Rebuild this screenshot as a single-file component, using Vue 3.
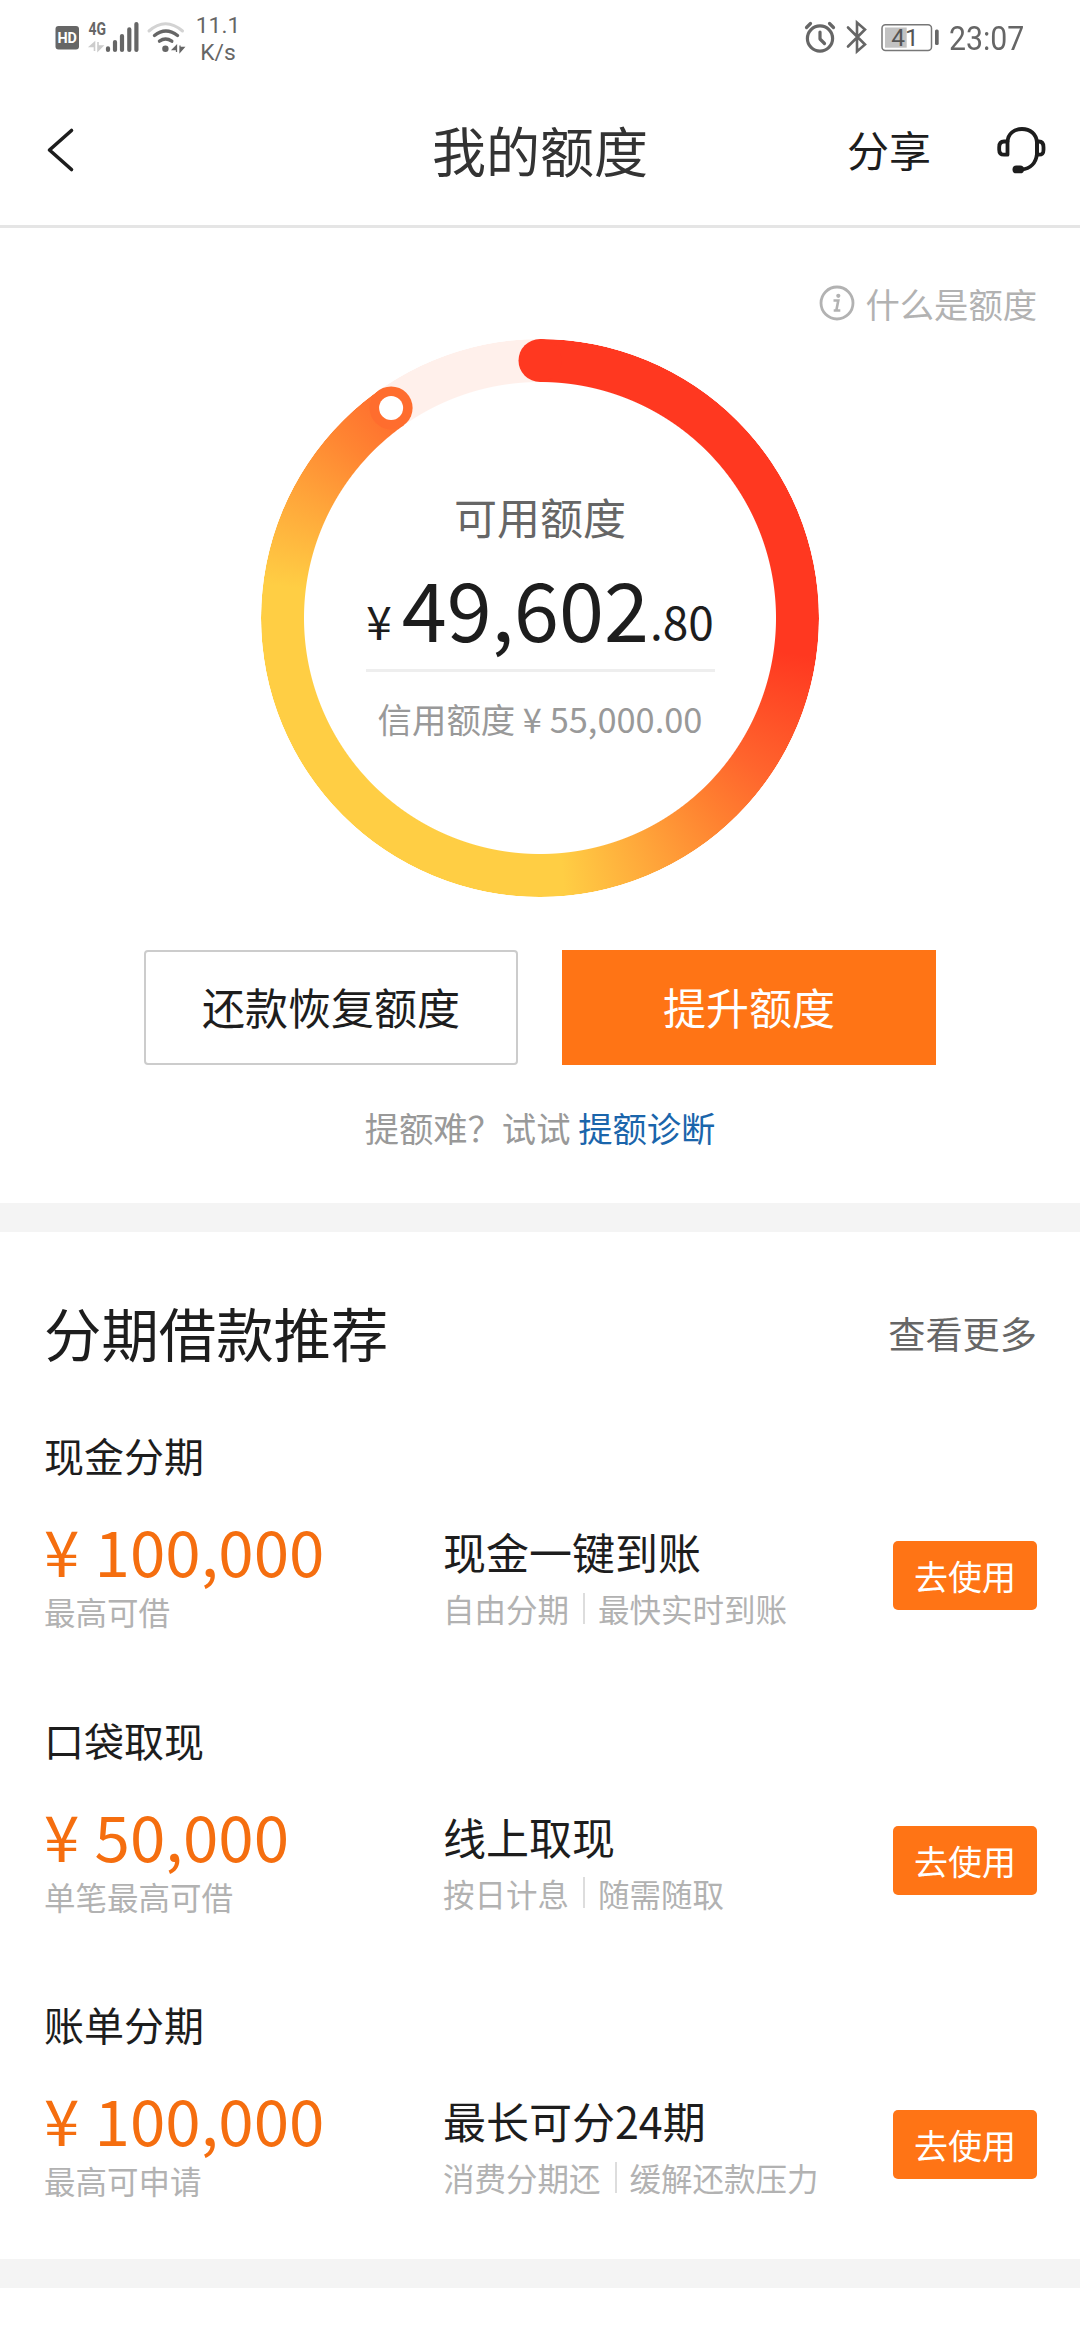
<script setup>
const total = 55000
const available = 49602.8
const ring = { size: 558, stroke: 43 }
const radius = (ring.size - ring.stroke) / 2
const endDeg = (available / total) * 360
const endRad = (endDeg * Math.PI) / 180
const end = {
  x: ring.size / 2 + radius * Math.sin(endRad),
  y: ring.size / 2 - radius * Math.cos(endRad)
}

const products = [
  { name: '现金分期', amount: '100,000', note: '最高可借', title: '现金一键到账', tags: ['自由分期', '最快实时到账'] },
  { name: '口袋取现', amount: '50,000', note: '单笔最高可借', title: '线上取现', tags: ['按日计息', '随需随取'] },
  { name: '账单分期', amount: '100,000', note: '最高可申请', title: '最长可分24期', tags: ['消费分期还', '缓解还款压力'] }
]
</script>

<template>
  <div class="screen">
    <div class="status">
      <svg class="status-left" width="140" height="60" viewBox="50 0 140 60">
        <rect x="55.5" y="26" width="23.5" height="23.5" rx="3" fill="#666" />
        <text x="67.2" y="42.8" class="hd" text-anchor="middle" textLength="19.5" lengthAdjust="spacingAndGlyphs">HD</text>
        <text x="88.5" y="35.4" class="g4" textLength="17.5" lengthAdjust="spacingAndGlyphs">4G</text>
        <path d="M94.5 51V42.5L90 46.5H94.5M98 42V50.5L102.5 46H98" fill="#ccc" stroke="#ccc" stroke-width="1.6" />
        <path d="M108 48.3V50M115 42V50M122 36V50M129.3 29.3V50M136.4 24V50" stroke="#666" stroke-width="4.2" stroke-linecap="round" />
        <g fill="none" stroke-linecap="round">
          <path d="M149 31Q165.5 16.5 182.5 31" stroke="#d3d3d3" stroke-width="3" />
          <path d="M154.5 35.5Q165.8 26.5 177.5 35.5" stroke="#666" stroke-width="3.4" />
          <path d="M159.5 41.2Q165.5 37 171.8 41.2" stroke="#666" stroke-width="3.4" />
        </g>
        <circle cx="165.4" cy="48.7" r="3.2" fill="#666" />
        <path d="M176.5 52V45.5L172.5 49.5H176.5M180 45.5V52L184 47.5H180" fill="#666" stroke="#666" stroke-width="1.3" />
      </svg>
      <div class="speed"><span>11.1</span><span>K/s</span></div>
      <svg class="status-right" width="142" height="60" viewBox="800 0 142 60">
        <g fill="none" stroke="#666" stroke-linecap="round">
          <circle cx="820" cy="38.5" r="12.6" stroke-width="3.2" />
          <path d="M820 32V39L824.5 43.5" stroke-width="3.2" stroke-linejoin="round" />
          <path d="M806.5 27.5L810.5 23.5M833.5 27.5L829.5 23.5" stroke-width="3.2" />
          <path d="M848 27.5L865 44.5L857 51.5V22.5L865 29.5L848 46.5" stroke-width="2.6" stroke-linejoin="miter" />
        </g>
        <rect x="882" y="24.8" width="49.5" height="25.6" rx="3.5" fill="none" stroke="#777" stroke-width="1.5" />
        <rect x="885" y="27.5" width="21.7" height="20.2" fill="#c2c2c2" />
        <text x="905" y="46" class="battery" text-anchor="middle">41</text>
        <rect x="935" y="29.5" width="3.7" height="15.5" rx="1.5" fill="#666" />
      </svg>
      <span class="clock">23:07</span>
    </div>

    <header class="nav">
      <svg class="back" width="32" height="50" viewBox="44 125 32 50">
        <path d="M71.5 130.5L49.5 150L71.5 169.5" fill="none" stroke="#1d1d1d" stroke-width="3.6" stroke-linecap="round" stroke-linejoin="round" />
      </svg>
      <h1>我的额度</h1>
      <div class="nav-right">
        <span class="share">分享</span>
        <svg width="52" height="50" viewBox="994.5 125.3 52 50">
          <g fill="none" stroke="#1d1d1d" stroke-width="3.8" stroke-linejoin="round" stroke-linecap="round">
            <path d="M1007 155V141.800H1003.500C1000 141.800 998.700 144 998.700 147.500V150C998.700 153.500 1000 155 1003.500 155Z" />
            <path d="M1036.500 155V141.800H1038.500C1042 141.800 1043 144 1043 147.500V150C1043 153.500 1042 155 1038.500 155Z" />
            <path d="M1007 142C1007.500 134 1013.500 129.300 1021.500 129.300C1029.500 129.300 1036 134 1036.500 143V154C1035.500 163 1030 169.300 1021 169.800" />
          </g>
          <rect x="1012" y="165.8" width="11.5" height="7.8" rx="3.9" fill="#1d1d1d" />
        </svg>
      </div>
    </header>

    <section class="quota">
      <div class="what">
        <svg width="36" height="36" viewBox="0 0 36 36">
          <circle cx="18" cy="18" r="16" fill="none" stroke="#b2b2b2" stroke-width="2.8" />
          <circle cx="19.3" cy="10.8" r="2.1" fill="#b2b2b2" />
          <path d="M14.5 15.5H19.3L17.3 25.5H21.3M17.3 25.5H14.7" fill="none" stroke="#b2b2b2" stroke-width="2.6" />
        </svg>
        <span>什么是额度</span>
      </div>

      <div class="gauge">
        <div class="ring" :style="{ '--end': endDeg + 'deg' }"></div>
        <svg class="caps" :viewBox="`0 0 ${ring.size} ${ring.size}`">
          <circle :cx="ring.size / 2" :cy="ring.stroke / 2" :r="ring.stroke / 2" fill="#ff3820" />
          <circle :cx="end.x" :cy="end.y" :r="ring.stroke / 2" fill="#ff6d2e" />
          <circle :cx="end.x" :cy="end.y" r="12" fill="#fff" />
        </svg>
        <div class="gauge-text">
          <div class="label">可用额度</div>
          <div class="amount"><span class="small yen">¥</span><span>49,602</span><span class="small cents">.80</span></div>
          <div class="credit">信用额度 ¥ 55,000.00</div>
        </div>
      </div>

      <div class="actions">
        <button class="btn outline">还款恢复额度</button>
        <button class="btn solid">提升额度</button>
      </div>
      <p class="hint">提额难？试试 <a>提额诊断</a></p>
    </section>

    <section class="loans">
      <div class="loans-head">
        <h2>分期借款推荐</h2>
        <span class="more">查看更多</span>
      </div>
      <article v-for="p in products" :key="p.name" class="loan">
        <h3>{{ p.name }}</h3>
        <div class="loan-row">
          <div class="col-amount">
            <div class="price">¥ {{ p.amount }}</div>
            <div class="note">{{ p.note }}</div>
          </div>
          <div class="col-info">
            <div class="info-title">{{ p.title }}</div>
            <div class="tags"><span>{{ p.tags[0] }}</span><i></i><span>{{ p.tags[1] }}</span></div>
          </div>
          <button class="use">去使用</button>
        </div>
      </article>
    </section>
  </div>
</template>

<style>
body {
  margin: 0;
  background: #fff;
}
</style>

<style scoped>
.screen {
  width: 1080px;
  height: 2340px;
  overflow: hidden;
  background: #fff;
  color: #1d1d1d;
  font-family: "Noto Sans CJK SC", "Noto Sans", sans-serif;
  display: flex;
  flex-direction: column;
}
h1, h2, h3, p {
  margin: 0;
  font-weight: 400;
}
button {
  font-family: inherit;
  padding: 0;
  border: 0;
  box-sizing: border-box;
  white-space: nowrap;
}
.status {
  height: 75px;
  padding-left: 50px;
  display: flex;
  align-items: flex-start;
  font-family: Roboto, sans-serif;
  color: #666;
  box-sizing: border-box;
}
.hd {
  font: 700 15px Roboto, sans-serif;
  fill: #fff;
}
.g4 {
  font: 700 18.5px Roboto, sans-serif;
  fill: #666;
}
.battery {
  font: 400 24.5px Roboto, sans-serif;
  fill: #555;
}
.speed {
  width: 56px;
  padding-top: 12px;
  display: flex;
  flex-direction: column;
  align-items: center;
  font-size: 22.8px;
  line-height: 27px;
}
.status-right {
  margin-left: 554px;
}
.clock {
  margin-left: 7px;
  font-size: 34px;
  line-height: 40px;
  margin-top: 18px;
  transform: scaleX(0.89);
  transform-origin: left;
}
.nav {
  height: 150px;
  border-bottom: 3px solid #e5e5e5;
  display: grid;
  grid-template-columns: 1fr auto 1fr;
  align-items: center;
  padding: 0 33px 0 44px;
}
.nav h1 {
  font-size: 54px;
  line-height: 80px;
  color: #333;
  margin: -1px 0 0 -11px;
}
.nav-right {
  justify-self: end;
  display: flex;
  align-items: center;
  gap: 64px;
}
.share {
  font-size: 42px;
  line-height: 60px;
  margin-top: -2px;
}
.quota {
  height: 975px;
  display: flex;
  flex-direction: column;
  align-items: center;
}
.what {
  align-self: flex-end;
  margin: 50px 43px 0 0;
  height: 50px;
  display: flex;
  align-items: center;
  gap: 11px;
  font-size: 34.3px;
  color: #b2b2b2;
}
.gauge {
  margin-top: 11px;
  width: 558px;
  height: 558px;
  display: grid;
}
.gauge > * {
  grid-area: 1 / 1;
}
.ring {
  border-radius: 50%;
  background: conic-gradient(#ff3820 0deg 98deg, #ff652d 125deg, #ff8030 138deg, #ffa93b 157deg, #ffce44 175deg 277deg, #ffa53a 297deg, #ff8532 312deg, #ff6d2e var(--end), #fff0eb var(--end));
  mask: radial-gradient(circle closest-side, transparent 235.5px, #000 236.5px, #000 278.5px, transparent 279.5px);
}
.caps {
  z-index: 1;
  width: 558px;
  height: 558px;
}
.gauge-text {
  z-index: 2;
  display: flex;
  flex-direction: column;
  align-items: center;
  padding-top: 147px;
}
.label {
  font-size: 43px;
  line-height: 60px;
  color: #666;
}
.amount {
  width: 349px;
  height: 123px;
  line-height: 121px;
  border-bottom: 3px solid #eee;
  font-size: 81px;
  display: flex;
  align-items: baseline;
  justify-content: center;
  white-space: nowrap;
}
.small {
  font-size: 46px;
  transform: translateY(-2px);
}
.yen {
  margin-right: 10px;
}
.cents {
  margin-left: 1px;
}
.credit {
  margin-top: 16px;
  font-size: 34.4px;
  line-height: 60px;
  color: #999;
  white-space: nowrap;
}
.actions {
  margin-top: 53px;
  display: flex;
  gap: 44px;
}
.btn {
  width: 374px;
  height: 115px;
  font-size: 43px;
  line-height: 109px;
}
.outline {
  background: #fff;
  border: 2px solid #ccc;
  border-radius: 4px;
  color: #1d1d1d;
  padding-bottom: 2px;
}
.solid {
  background: #ff7415;
  color: #fff;
  padding-bottom: 2px;
}
.hint {
  margin-top: 32px;
  font-size: 34.3px;
  line-height: 60px;
  color: #999;
}
.hint a {
  color: #1a65ab;
}
.loans {
  border-top: 29px solid #f4f4f4;
  border-bottom: 29px solid #f4f4f4;
  height: 1027px;
  padding: 0 43px 0 44px;
}
.loans-head {
  display: flex;
  justify-content: space-between;
  align-items: center;
  height: 80px;
  padding-top: 61px;
}
h2 {
  font-size: 57.4px;
  line-height: 80px;
  margin-top: -3px;
}
.more {
  font-size: 37.2px;
  line-height: 60px;
  margin-top: -1px;
  color: #666;
}
.loan {
  height: 284.7px;
  display: flex;
  flex-direction: column;
}
.loan h3 {
  padding-top: 52px;
  font-size: 40px;
  line-height: 60px;
}
.loan-row {
  display: flex;
  align-items: flex-start;
  padding-top: 24px;
}
.col-amount {
  width: 399px;
}
.price {
  font-size: 63.7px;
  line-height: 80px;
  word-spacing: 1px;
  color: #f56e0f;
  white-space: nowrap;
}
.note,
.tags {
  font-size: 31.5px;
  line-height: 40px;
  color: #b2b2b2;
}
.note {
  margin-top: 2px;
}
.col-info {
  flex: 1;
  padding-top: 12px;
}
.info-title {
  font-size: 43px;
  line-height: 60px;
}
.tags {
  margin-top: 7px;
  display: flex;
  align-items: center;
}
.tags i {
  width: 2px;
  height: 31px;
  margin: 0 13px 0 14px;
  background: #ddd;
}
.use {
  width: 144px;
  height: 69px;
  margin-top: 32px;
  border-radius: 5px;
  background: #ff7415;
  color: #fff;
  font-size: 34px;
  line-height: 69px;
}
</style>
